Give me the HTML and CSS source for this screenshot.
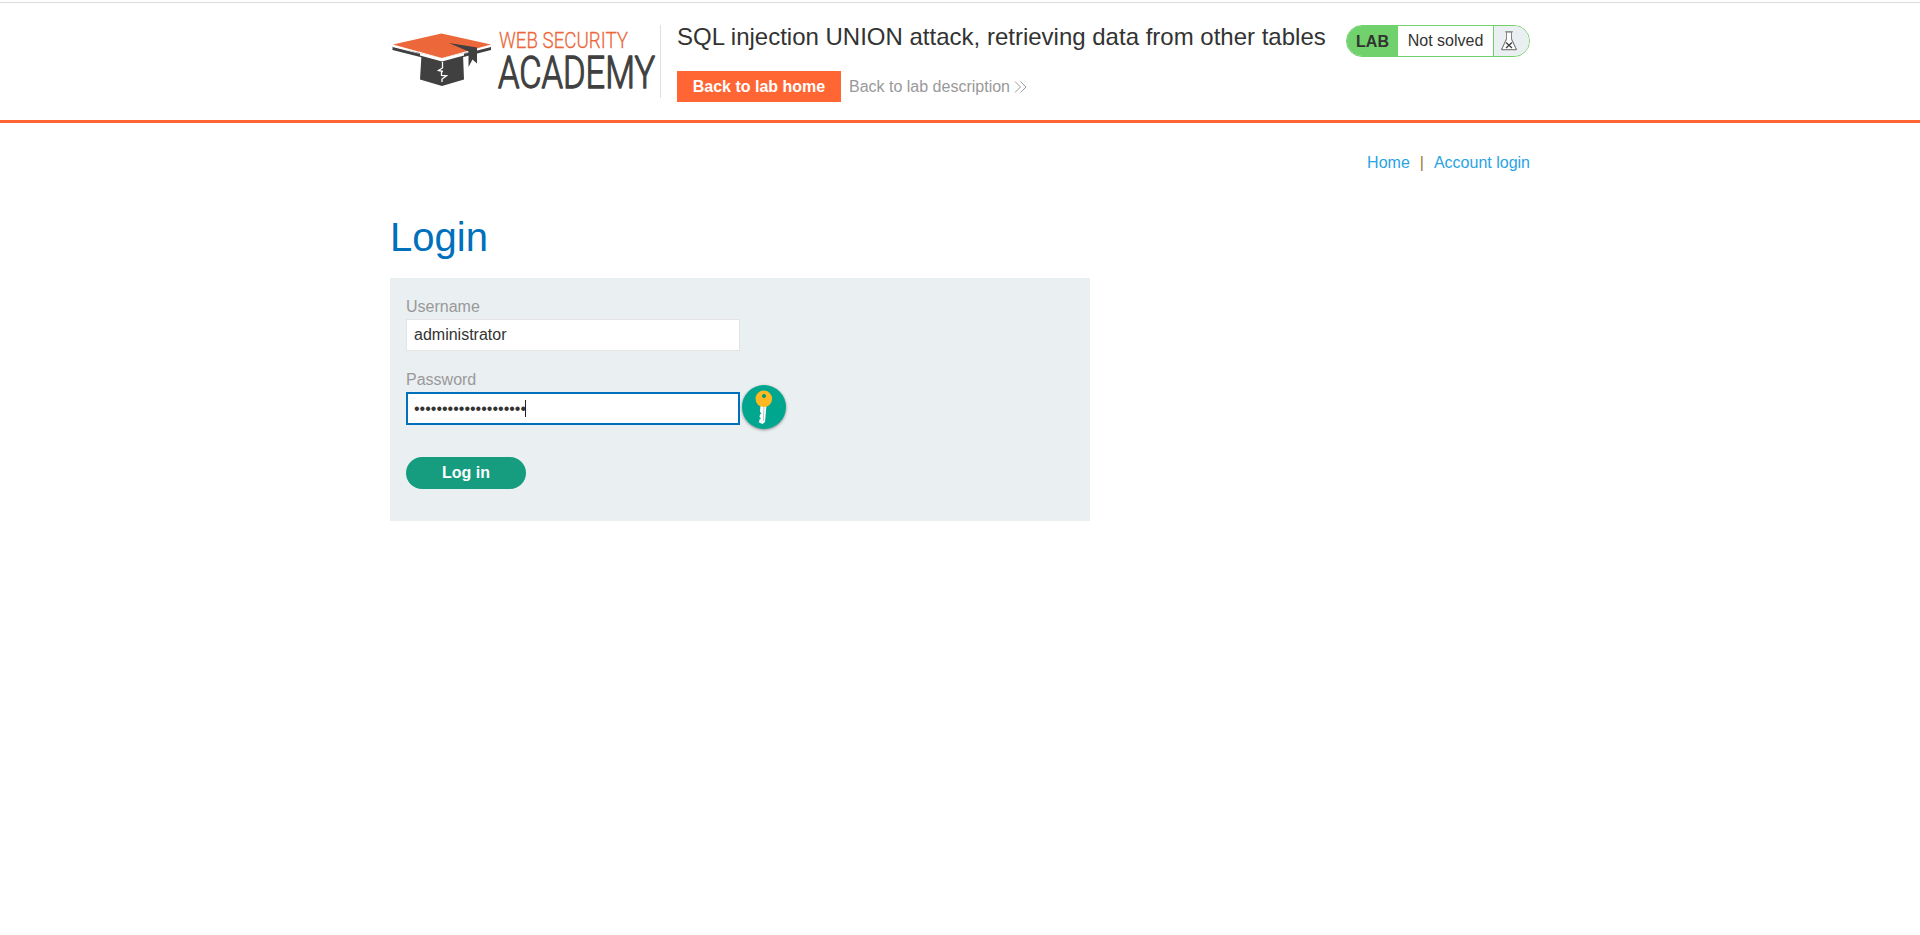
FILE: index.html
```html
<!DOCTYPE html>
<html lang="en">
<head>
<meta charset="utf-8">
<title>SQL injection UNION attack, retrieving data from other tables</title>
<link rel="stylesheet" href="styles.css">
</head>
<body>
<header class="lab-header">
  <div class="container header-row">
    <svg class="logo" viewBox="0 0 270 73" role="img" aria-label="Web Security Academy">
      <path fill="#404040" d="M31.500 29.500 52 34.500 73 29 74 54.500 52 61 30 54.500Z"/>
      <path fill="#404040" d="M2.500 21.500 52 33.500 101 21.500V25L52 37.500 2.500 25Z"/>
      <path fill="#fff" d="M2 20 52 35.500 101 20 101 22 52 34.500 2.500 22Z"/>
      <path fill="#fff" d="M30 28 52 33 74 28V30.500L52 36.500 30 30.500Z"/>
      <path fill="#ec673a" d="M3 19.500 51.500 8.500 101 19.500 52 33Z"/>
      <path fill="#404040" d="M59 18 87 22.500V38.500L82.500 34.500 78.500 42V26.500Z"/>
      <path fill="none" stroke="#fff" stroke-width="1.300" d="M52.500 37V43L48.500 45.500 53 46.500M51.500 46V50.500L56.500 50.800 52 54V57"/>
      <text class="logo-top" x="109" y="23" textLength="129" lengthAdjust="spacingAndGlyphs">WEB SECURITY</text>
      <text class="logo-main" x="108" y="63" textLength="157" lengthAdjust="spacingAndGlyphs">ACADEMY</text>
    </svg>
    <div class="title-block">
      <h2 class="lab-title">SQL injection UNION attack, retrieving data from other tables</h2>
      <div class="lab-links">
        <a class="lab-home">Back to lab home</a>
        <a class="lab-desc">Back to lab description
          <svg class="chevrons" viewBox="0 0 13 12"><path d="M1 .5 6.500 6 1 11.500M6.500 .5 12 6 6.500 11.500"/></svg>
        </a>
      </div>
    </div>
    <div class="lab-status">
      <span class="status-tag">LAB</span>
      <span class="status-text">Not solved</span>
      <span class="status-icon">
        <svg class="flask" viewBox="0 0 18 20"><path fill="#fff" d="M6.500 1V8L1.500 18.500H16.500L11.500 8V1Z"/><path d="M5 .8H13M6.500 1V8L1.500 18.800H16.500L11.500 8V1"/><path class="cross" d="M6 11.500 12 17M12 11.500 6 17"/></svg>
      </span>
    </div>
  </div>
</header>
<main class="container">
  <nav class="top-links"><a>Home</a><span class="bar">|</span><a>Account login</a></nav>
  <h1 class="page-title">Login</h1>
  <form class="login-form">
    <label class="label">Username</label>
    <div class="field">administrator</div>
    <label class="label">Password</label>
    <div class="password-row">
      <div class="field focused">••••••••••••••••••••<span class="caret"></span></div>
      <span class="key-badge">
        <svg viewBox="0 0 44 44"><path fill="#fff" d="M18.500 20H24.500L23 37 20.500 39 17 37.500 17.500 34.500 19 33.500 17.500 32 18 29.500 19.500 28.500 18 27Z"/><path stroke="#b9c4c4" stroke-width="1" d="M22 22 21.300 36"/><circle cx="21.800" cy="13.800" r="8.300" fill="#fdb822"/><circle cx="22" cy="11" r="2" fill="#00967a"/></svg>
      </span>
    </div>
    <button class="submit" type="button">Log in</button>
  </form>
</main>
</body>
</html>
```
FILE: styles.css
```css
* { box-sizing: border-box; }
body {
  margin: 0;
  padding-top: 2px;
  background: #fff;
  color: #333332;
  font: 16px/20px "Liberation Sans", Arial, sans-serif;
}
.container { width: 1140px; margin: 0 auto; }
.lab-header {
  height: 121px;
  border-top: 1px solid #dadce0;
  border-bottom: 3px solid #ff6633;
  padding-top: 22px;
}
.header-row { display: flex; align-items: flex-start; }
.logo { width: 271px; height: 73px; border-right: 1px solid #e0e0e0; overflow: visible; }
.logo text { font-family: Roboto, sans-serif; font-weight: 300; stroke-linejoin: round; }
.logo-top { font-size: 22.5px; fill: #ec673a; stroke: #ec673a; stroke-width: .3px; }
.logo-main { font-size: 43.5px; fill: #404040; stroke: #404040; stroke-width: 1.3px; }
.title-block { margin-left: 16px; flex: 1; }
.lab-title { margin: 0; font-size: 24px; line-height: 24px; font-weight: 400; white-space: nowrap; }
.lab-links { display: flex; gap: 8px; margin-top: 22px; }
.lab-home { width: 164px; background: #ff6633; color: #fff; font-weight: 700; line-height: 31px; text-align: center; }
.lab-desc { color: #999; line-height: 31px; }
.chevrons { width: 13px; height: 12px; fill: none; stroke: #999; stroke-width: 1; vertical-align: -1px; margin-left: -.5px; }
.lab-status {
  display: flex;
  width: 184px;
  height: 32px;
  border: 1px solid #70d16d;
  border-radius: 16px;
  overflow: hidden;
  line-height: 30px;
}
.status-tag { width: 51px; background: #70d16d; font-weight: 700; text-align: center; line-height: 31px; }
.status-text { width: 95px; text-align: center; }
.status-icon { flex: 1; border-left: 1px solid #70d16d; background: #eaeff2; padding: 5px 0 0 6px; line-height: 0; }
.flask { width: 18px; height: 20px; fill: none; stroke: #858585; }
.cross { stroke: #444; stroke-width: 1.4; }
.top-links { display: flex; justify-content: flex-end; margin-top: 30px; line-height: 20px; color: #29a3e3; }
.bar { margin: 0 10px; color: #987b32; }
.page-title { margin: 40px 0 17px; font-size: 40px; line-height: 48px; font-weight: 400; color: #0070bd; }
.login-form { width: 700px; height: 243px; background: #eaeff2; padding: 19px 16px; }
.label { display: block; line-height: 20px; margin-bottom: 2px; color: #999; }
.field {
  width: 334px;
  height: 32px;
  padding: 0 7px;
  border: 1px solid #e4e4e4;
  background: #fff;
  line-height: 29px;
}
.field + .label { margin-top: 19px; }
.password-row { display: flex; align-items: center; gap: 2px; height: 33px; }
.focused { display: flex; align-items: center; height: 33px; padding: 0 6px; border: 2px solid #0070bd; }
.caret { width: 1px; height: 17px; margin-left: -1px; background: #222; }
.key-badge { width: 44px; height: 44px; border-radius: 50%; background: #00a78e; box-shadow: 0 1px 3px rgba(0,0,0,.4); margin-top: -3px; }
.key-badge svg { display: block; width: 44px; height: 44px; }
.submit {
  width: 120px;
  height: 32px;
  margin-top: 32px;
  padding: 0;
  border: 0;
  border-radius: 16px;
  background: #169c7f;
  color: #fff;
  font: 700 16px/30px "Liberation Sans", Arial, sans-serif;
}
```
